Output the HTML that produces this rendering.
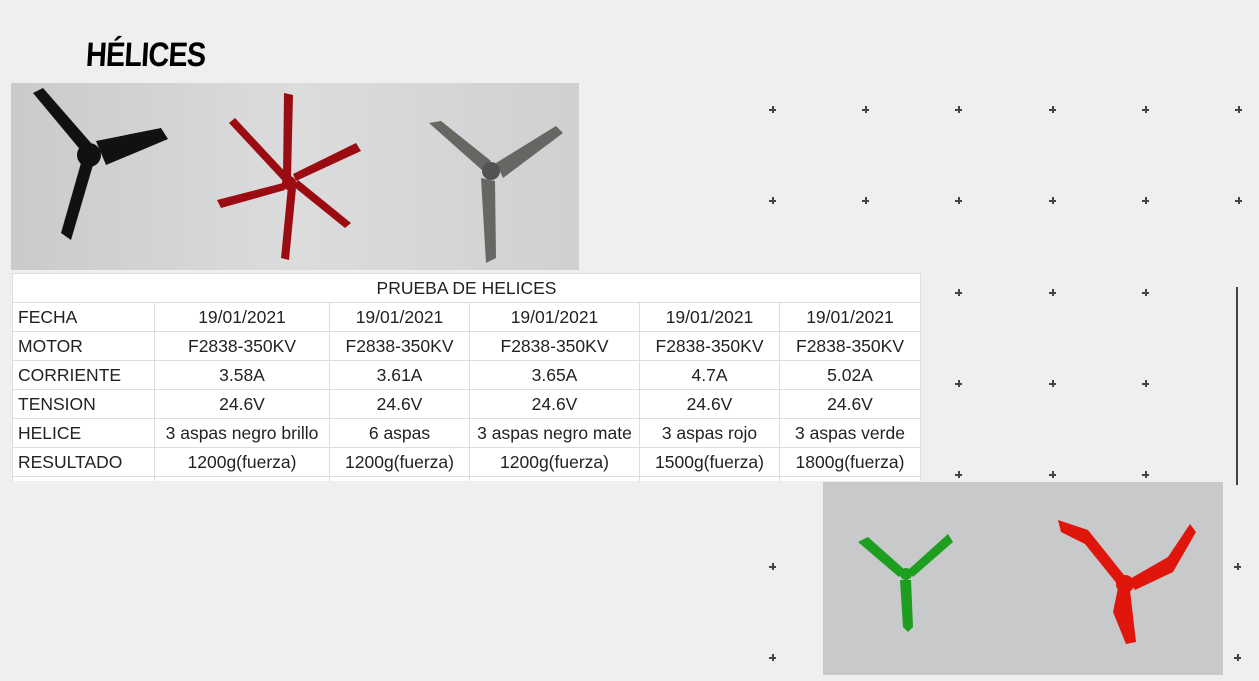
<!DOCTYPE html>
<html><head><meta charset="utf-8"><style>
body{margin:0;width:1259px;height:681px;background:#efefef;position:relative;overflow:hidden;font-family:"Liberation Sans",sans-serif}
.p{position:absolute;width:7px;height:7px;margin-left:-3px;margin-top:-3px}
.p:before{content:"";position:absolute;left:0;top:3px;width:7px;height:2px;background:#444}
.p:after{content:"";position:absolute;left:2.5px;top:0;width:2px;height:7px;background:#444}
h1{position:absolute;left:86px;top:36px;margin:0;font:bold 34px "Liberation Sans Narrow","Liberation Sans",sans-serif;letter-spacing:-1px;transform:scaleX(.85) skewX(-4deg);transform-origin:left;color:#000}
table{position:absolute;left:12px;top:273px;border-collapse:collapse;background:#fff;font-size:17.5px;color:#222}
td{border:1px solid #ddd;height:28px;padding:0;text-align:center;white-space:nowrap}
td:first-child{text-align:left;padding-left:5px}
tr.last td{height:4px;font-size:0;line-height:0;border-bottom:none}
</style></head><body>
<h1>HÉLICES</h1>
<svg style="position:absolute;left:11px;top:83px" width="568" height="187">
<defs><linearGradient id="g" x1="0" x2="1"><stop offset="0" stop-color="#c9cacc"/><stop offset=".5" stop-color="#dcdcdd"/><stop offset="1" stop-color="#cfd0d1"/></linearGradient></defs>
<rect width="568" height="187" fill="url(#g)"/>
<g fill="#111"><path d="M22 10 L32 5 L80 60 L72 70 Z"/><path d="M85 58 L150 45 L157 56 L95 82 Z"/><path d="M70 80 L82 82 L60 157 L50 150 Z"/><circle cx="78" cy="72" r="12"/></g>
<g fill="#9b0b12"><path d="M273 10 L282 12 L280 95 L272 95 Z"/><path d="M270 175 L278 177 L285 105 L277 103 Z"/><path d="M218 40 L224 35 L278 93 L272 98 Z"/><path d="M340 140 L334 145 L282 103 L287 97Z"/><path d="M210 125 L206 117 L272 100 L274 107Z"/><path d="M345 60 L350 68 L285 98 L282 91Z"/><circle cx="278" cy="100" r="7"/></g>
<g fill="#4d4b47" opacity=".8"><path d="M418 40 L430 38 L480 78 L472 88 Z"/><path d="M485 80 L545 43 L552 50 L492 95 Z"/><path d="M470 95 L484 98 L485 175 L475 180 Z"/><circle cx="480" cy="88" r="9" fill="#333"/></g>
</svg>
<table>
<tr><td colspan="6" style="text-align:center;padding:0">PRUEBA DE HELICES</td></tr>
<tr><td style="width:136px">FECHA</td><td style="width:174px">19/01/2021</td><td style="width:139px">19/01/2021</td><td style="width:169px">19/01/2021</td><td style="width:139px">19/01/2021</td><td style="width:140px">19/01/2021</td></tr>
<tr><td>MOTOR</td><td>F2838-350KV</td><td>F2838-350KV</td><td>F2838-350KV</td><td>F2838-350KV</td><td>F2838-350KV</td></tr>
<tr><td>CORRIENTE</td><td>3.58A</td><td>3.61A</td><td>3.65A</td><td>4.7A</td><td>5.02A</td></tr>
<tr><td>TENSION</td><td>24.6V</td><td>24.6V</td><td>24.6V</td><td>24.6V</td><td>24.6V</td></tr>
<tr><td>HELICE</td><td>3 aspas negro brillo</td><td>6 aspas</td><td>3 aspas negro mate</td><td>3 aspas rojo</td><td>3 aspas verde</td></tr>
<tr><td>RESULTADO</td><td>1200g(fuerza)</td><td>1200g(fuerza)</td><td>1200g(fuerza)</td><td>1500g(fuerza)</td><td>1800g(fuerza)</td></tr>
<tr class="last"><td></td><td></td><td></td><td></td><td></td><td></td></tr>
</table>
<div style="position:absolute;left:1236px;top:287px;width:2px;height:198px;background:#444"></div>
<svg style="position:absolute;left:823px;top:482px" width="400" height="193">
<rect width="400" height="193" fill="#c8c9ca"/>
<g fill="#1e9e1e"><path d="M35 60 L45 55 L82 88 L76 95Z"/><path d="M85 88 L125 52 L130 60 L90 95Z"/><path d="M77 98 L88 98 L90 145 L85 150 L80 145Z"/><circle cx="83" cy="92" r="6"/></g>
<g fill="#e0160c"><path d="M235 38 L265 48 L305 98 L295 103 L262 62 L238 50Z"/><path d="M305 98 L345 75 L367 42 L373 50 L350 90 L312 108Z"/><path d="M295 106 L307 108 L313 160 L303 162 L290 130Z"/><circle cx="302" cy="102" r="9"/></g>
</svg>
<div class="p" style="left:772px;top:109px"></div><div class="p" style="left:865px;top:109px"></div><div class="p" style="left:958px;top:109px"></div><div class="p" style="left:1052px;top:109px"></div><div class="p" style="left:1145px;top:109px"></div><div class="p" style="left:1238px;top:109px"></div>
<div class="p" style="left:772px;top:200px"></div><div class="p" style="left:865px;top:200px"></div><div class="p" style="left:958px;top:200px"></div><div class="p" style="left:1052px;top:200px"></div><div class="p" style="left:1145px;top:200px"></div><div class="p" style="left:1238px;top:200px"></div>
<div class="p" style="left:958px;top:292px"></div><div class="p" style="left:1052px;top:292px"></div><div class="p" style="left:1145px;top:292px"></div>
<div class="p" style="left:958px;top:383px"></div><div class="p" style="left:1052px;top:383px"></div><div class="p" style="left:1145px;top:383px"></div>
<div class="p" style="left:958px;top:474px"></div><div class="p" style="left:1052px;top:474px"></div><div class="p" style="left:1145px;top:474px"></div>
<div class="p" style="left:772px;top:566px"></div><div class="p" style="left:1237px;top:566px"></div>
<div class="p" style="left:772px;top:657px"></div><div class="p" style="left:1237px;top:657px"></div>
</body></html>
